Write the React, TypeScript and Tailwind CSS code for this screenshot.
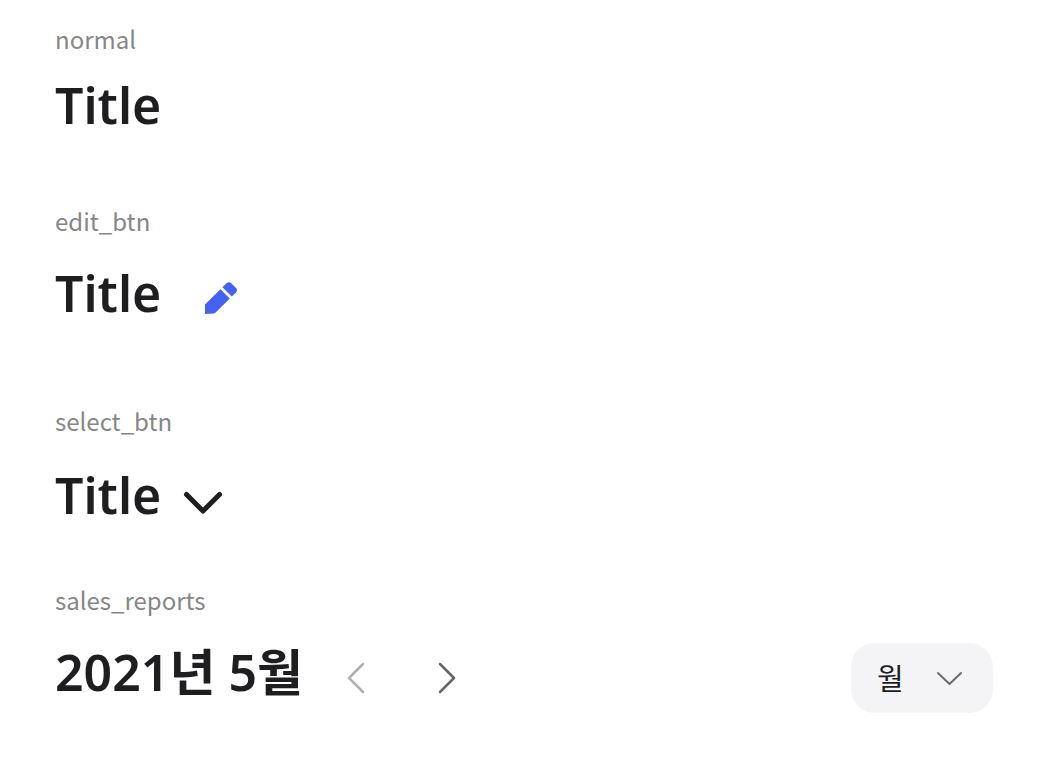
import React from 'react';

const Label = ({ children }: { children: React.ReactNode }) => (
    <p className="text-2xl leading-10 text-[#868686]">{children}</p>
);

const Title = ({ children }: { children: React.ReactNode }) => (
    <h2 className="pb-3 font-['Noto_Sans','Noto_Sans_CJK_KR',sans-serif] text-[50px] leading-[60px] font-semibold text-[#1e1e20]">{children}</h2>
);

const PencilIcon = () => (
    <svg viewBox="0 0 34 34" className="w-[34px] h-[34px]" fill="#4461f2" aria-hidden="true">
        <path d="M1 32V22.4L16.4 7.2L25.8 16.6L11.4 30.8Q10.6 31.4 9.6 31.5Z" />
        <path d="M18.4 5.2L22.6 1.2Q24.9 -0.8 27.2 1.2L32 6Q34 8.2 32 10.4L27.8 14.6Z" />
    </svg>
);

const Chevron = ({ points, width }: { points: string; width: number }) => (
    <svg viewBox="0 0 40 40" className="w-10 h-10" fill="none" stroke="currentColor" strokeWidth={width} strokeLinecap="round" strokeLinejoin="round" aria-hidden="true">
        <polyline points={points} />
    </svg>
);

export default function App() {
    return (
        <main className="min-h-screen bg-white px-[55px] pt-[19px] pb-12 font-['Noto_Sans_CJK_KR',sans-serif]">
            <section className="mb-[54px]">
                <Label>normal</Label>
                <div className="mt-4 flex items-center">
                    <Title>Title</Title>
                </div>
            </section>

            <section className="mb-[66px]">
                <Label>edit_btn</Label>
                <div className="mt-[22px] flex items-center">
                    <Title>Title</Title>
                    <button type="button" aria-label="edit" className="ml-[43px]"><PencilIcon /></button>
                </div>
            </section>

            <section className="mb-[43px]">
                <Label>select_btn</Label>
                <div className="mt-6 flex items-center">
                    <Title>Title</Title>
                    <button type="button" aria-label="select" className="ml-[22px] text-[#1e1e20]">
                        <Chevron points="3.5,13.5 20,30 36.5,13.5" width={5} />
                    </button>
                </div>
            </section>

            <section>
                <Label>sales_reports</Label>
                <div className="mt-[22px] flex items-center">
                    <Title>2021년 5월</Title>
                    <button type="button" aria-label="이전" className="ml-8 text-[#aeaeb4]">
                        <Chevron points="28,6 14,20 28,34" width={2.5} />
                    </button>
                    <button type="button" aria-label="다음" className="ml-[52px] text-[#666666]">
                        <Chevron points="13,6 27,20 13,34" width={2.5} />
                    </button>
                    <label className="relative ml-auto">
                        <select aria-label="기간" className="h-[70px] w-[142px] appearance-none rounded-3xl bg-[#f4f4f6] pl-[26px] text-[29px] text-[#1e1e20]">
                            <option>월</option>
                        </select>
                        <span className="pointer-events-none absolute right-6 top-[15px] text-[#6c6c70]">
                            <Chevron points="9,15 20.5,26 32,15" width={2} />
                        </span>
                    </label>
                </div>
            </section>
        </main>
    );
}
